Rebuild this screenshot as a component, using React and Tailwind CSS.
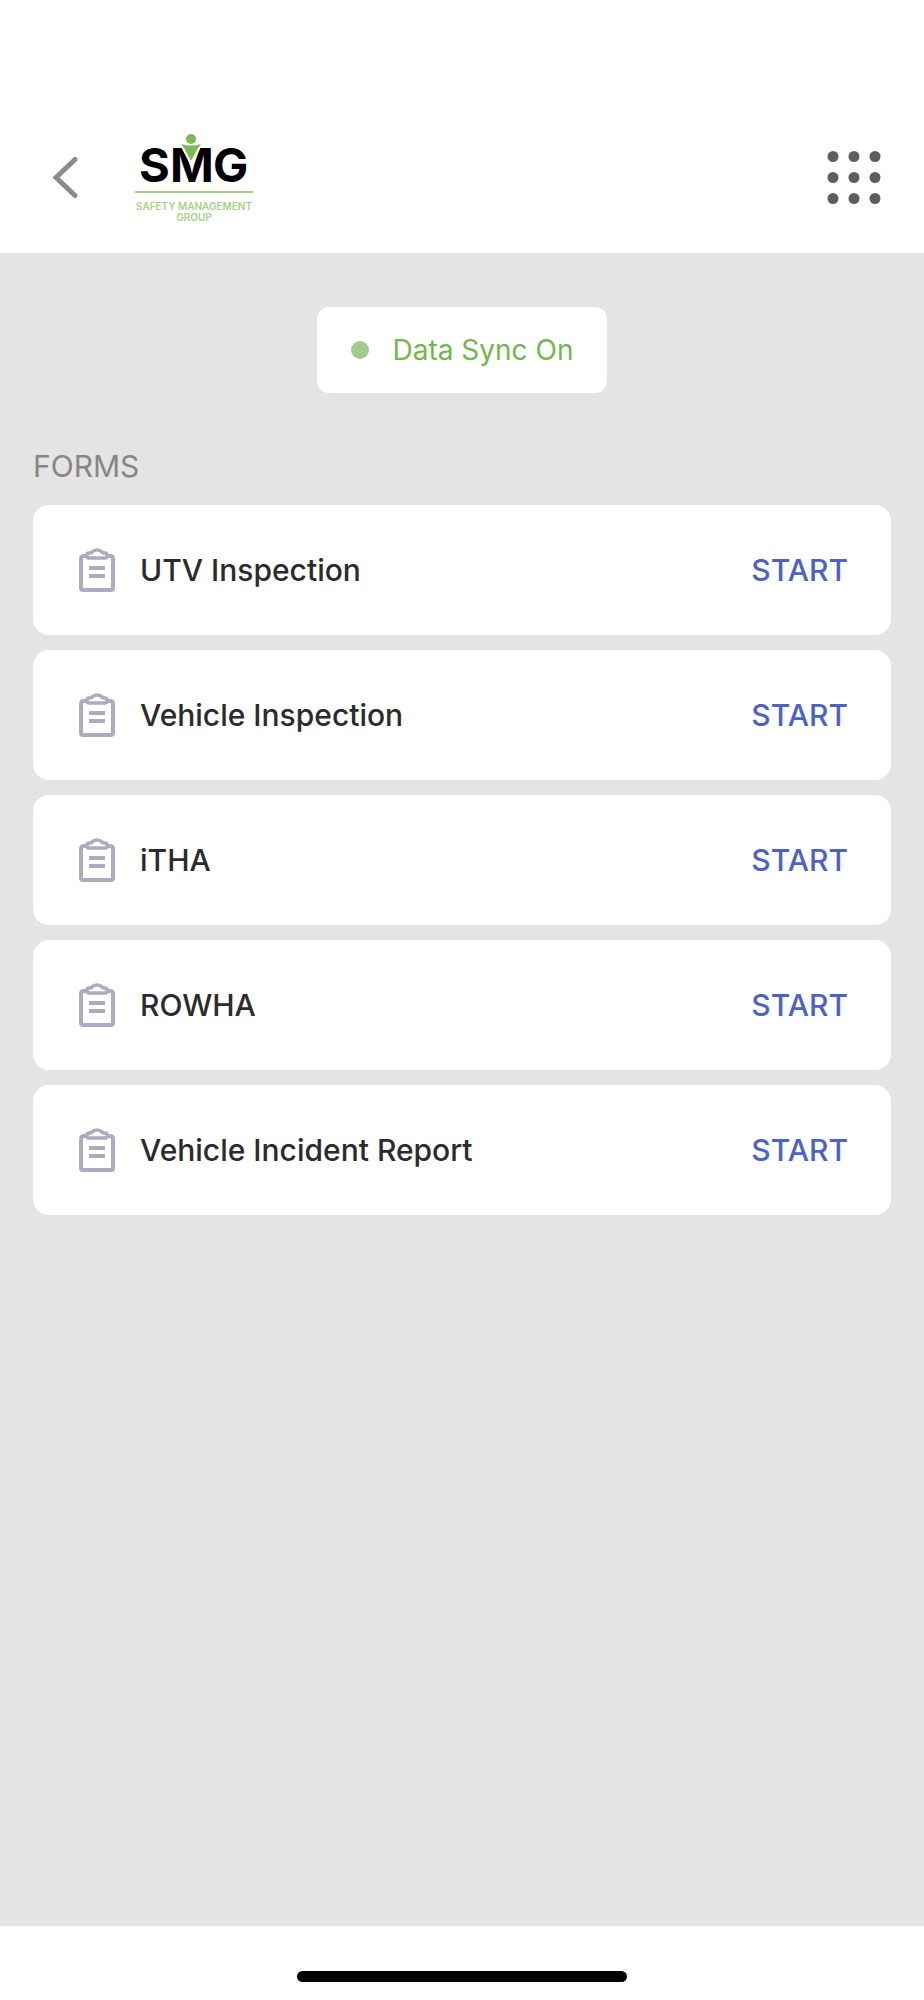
const forms = [
    { id: 1, name: "UTV Inspection" },
    { id: 2, name: "Vehicle Inspection" },
    { id: 3, name: "iTHA" },
    { id: 4, name: "ROWHA" },
    { id: 5, name: "Vehicle Incident Report" },
];

function Logo() {
    return (
        <svg width="120" height="92" viewBox="0 0 120 92" role="img" aria-label="SMG Safety Management Group">
            <g fill="#000" fontFamily="Inter" fontWeight="700" fontSize="47">
                <text x="5" y="50">S</text>
                <text x="36" y="50">M</text>
                <text x="79" y="50">G</text>
            </g>
            {/* Figure standing in the M */}
            <path d="M45 11 H69 L57 34 Z" fill="#fff" />
            <path d="M47 12 Q57 15 67 12 L64 16 L57 29 L50 16 Z" fill="#7db955" />
            <circle cx="57" cy="7" r="6" fill="#fff" />
            <circle cx="57" cy="7" r="5" fill="#7db955" />
            <path d="M1 60 H119" stroke="#a5d287" strokeWidth="2" />
            <g fill="#a5d287" fontFamily="Inter" fontWeight="600" fontSize="10" textAnchor="middle">
                <text x="60" y="78">SAFETY MANAGEMENT</text>
                <text x="60" y="89">GROUP</text>
            </g>
        </svg>
    );
}

function ClipboardIcon() {
    return (
        <svg width="36" height="44" viewBox="0 0 36 44" fill="none" stroke="#aeaabf" strokeWidth="4" strokeLinejoin="round" aria-hidden="true">
            <path d="M8 8 H5 Q2 8 2 11 V40 Q2 42 4 42 H32 Q34 42 34 40 V11 Q34 8 31 8 H28" />
            <path
                strokeWidth="3.6"
                d="M10 5 H11 Q12 5 13 4 Q15 2 18 2 Q21 2 23 4 Q24 5 25 5 H26 Q28 5 28 7 V8 Q28 10 26 10 H10 Q8 10 8 8 V7 Q8 5 10 5 Z"
            />
            <path d="M10 20 H26 M10 28 H26" />
        </svg>
    );
}

function FormCard({ form }) {
    return (
        <li className="flex h-[130px] items-center rounded-2xl bg-white pr-[43px] pl-[46px]">
            <ClipboardIcon />
            <span className="ml-[25px] flex-1 text-[30px] font-medium text-[#2b2b2b]">{form.name}</span>
            <button type="button" className="text-[30px] font-medium text-[#4d62c9]" aria-label={`START ${form.name}`}>
                START
            </button>
        </li>
    );
}

export default function App() {
    return (
        <div className="flex min-h-screen flex-col bg-white font-['Inter',sans-serif]">
            {/* Header */}
            <header className="flex items-center pt-[132px] pr-[43px] pb-[29px] pl-[52px]">
                <button type="button" aria-label="Back">
                    <svg width="26" height="42" viewBox="0 0 26 42" fill="none" stroke="#8b8b8b" strokeWidth="5" strokeLinecap="round">
                        <path d="M23 2.5 L4 20.5 L23 38.5" />
                    </svg>
                </button>
                <div className="ml-14 flex-1">
                    <Logo />
                </div>
                <button type="button" aria-label="Menu">
                    <svg width="54" height="54" viewBox="0 0 54 54" fill="#5e5e5e">
                        {[5.5, 26.5, 47.5].map((y) =>
                            [6, 27, 48].map((x) => <circle key={`${x}-${y}`} cx={x} cy={y} r="5.5" />)
                        )}
                    </svg>
                </button>
            </header>

            <main className="flex-1 bg-[#e4e4e4] px-[33px] pt-[54px]">
                {/* Sync status */}
                <div className="mx-auto flex h-[86px] w-fit items-center gap-6 rounded-xl bg-white px-[34px]">
                    <span className="size-[18px] rounded-full bg-[#a1ca8b]"></span>
                    <span className="text-[28px] text-[#72b74e]">Data Sync On</span>
                </div>

                <h2 className="mt-[52px] text-[30px] leading-[42px] text-[#868686]">FORMS</h2>
                <ul className="mt-[18px] flex flex-col gap-[15px]">
                    {forms.map((form) => (
                        <FormCard key={form.id} form={form} />
                    ))}
                </ul>
            </main>

            {/* Home indicator */}
            <footer className="flex justify-center pt-[45px] pb-[18px]">
                <div className="h-[11px] w-[330px] rounded-full bg-black"></div>
            </footer>
        </div>
    );
}
